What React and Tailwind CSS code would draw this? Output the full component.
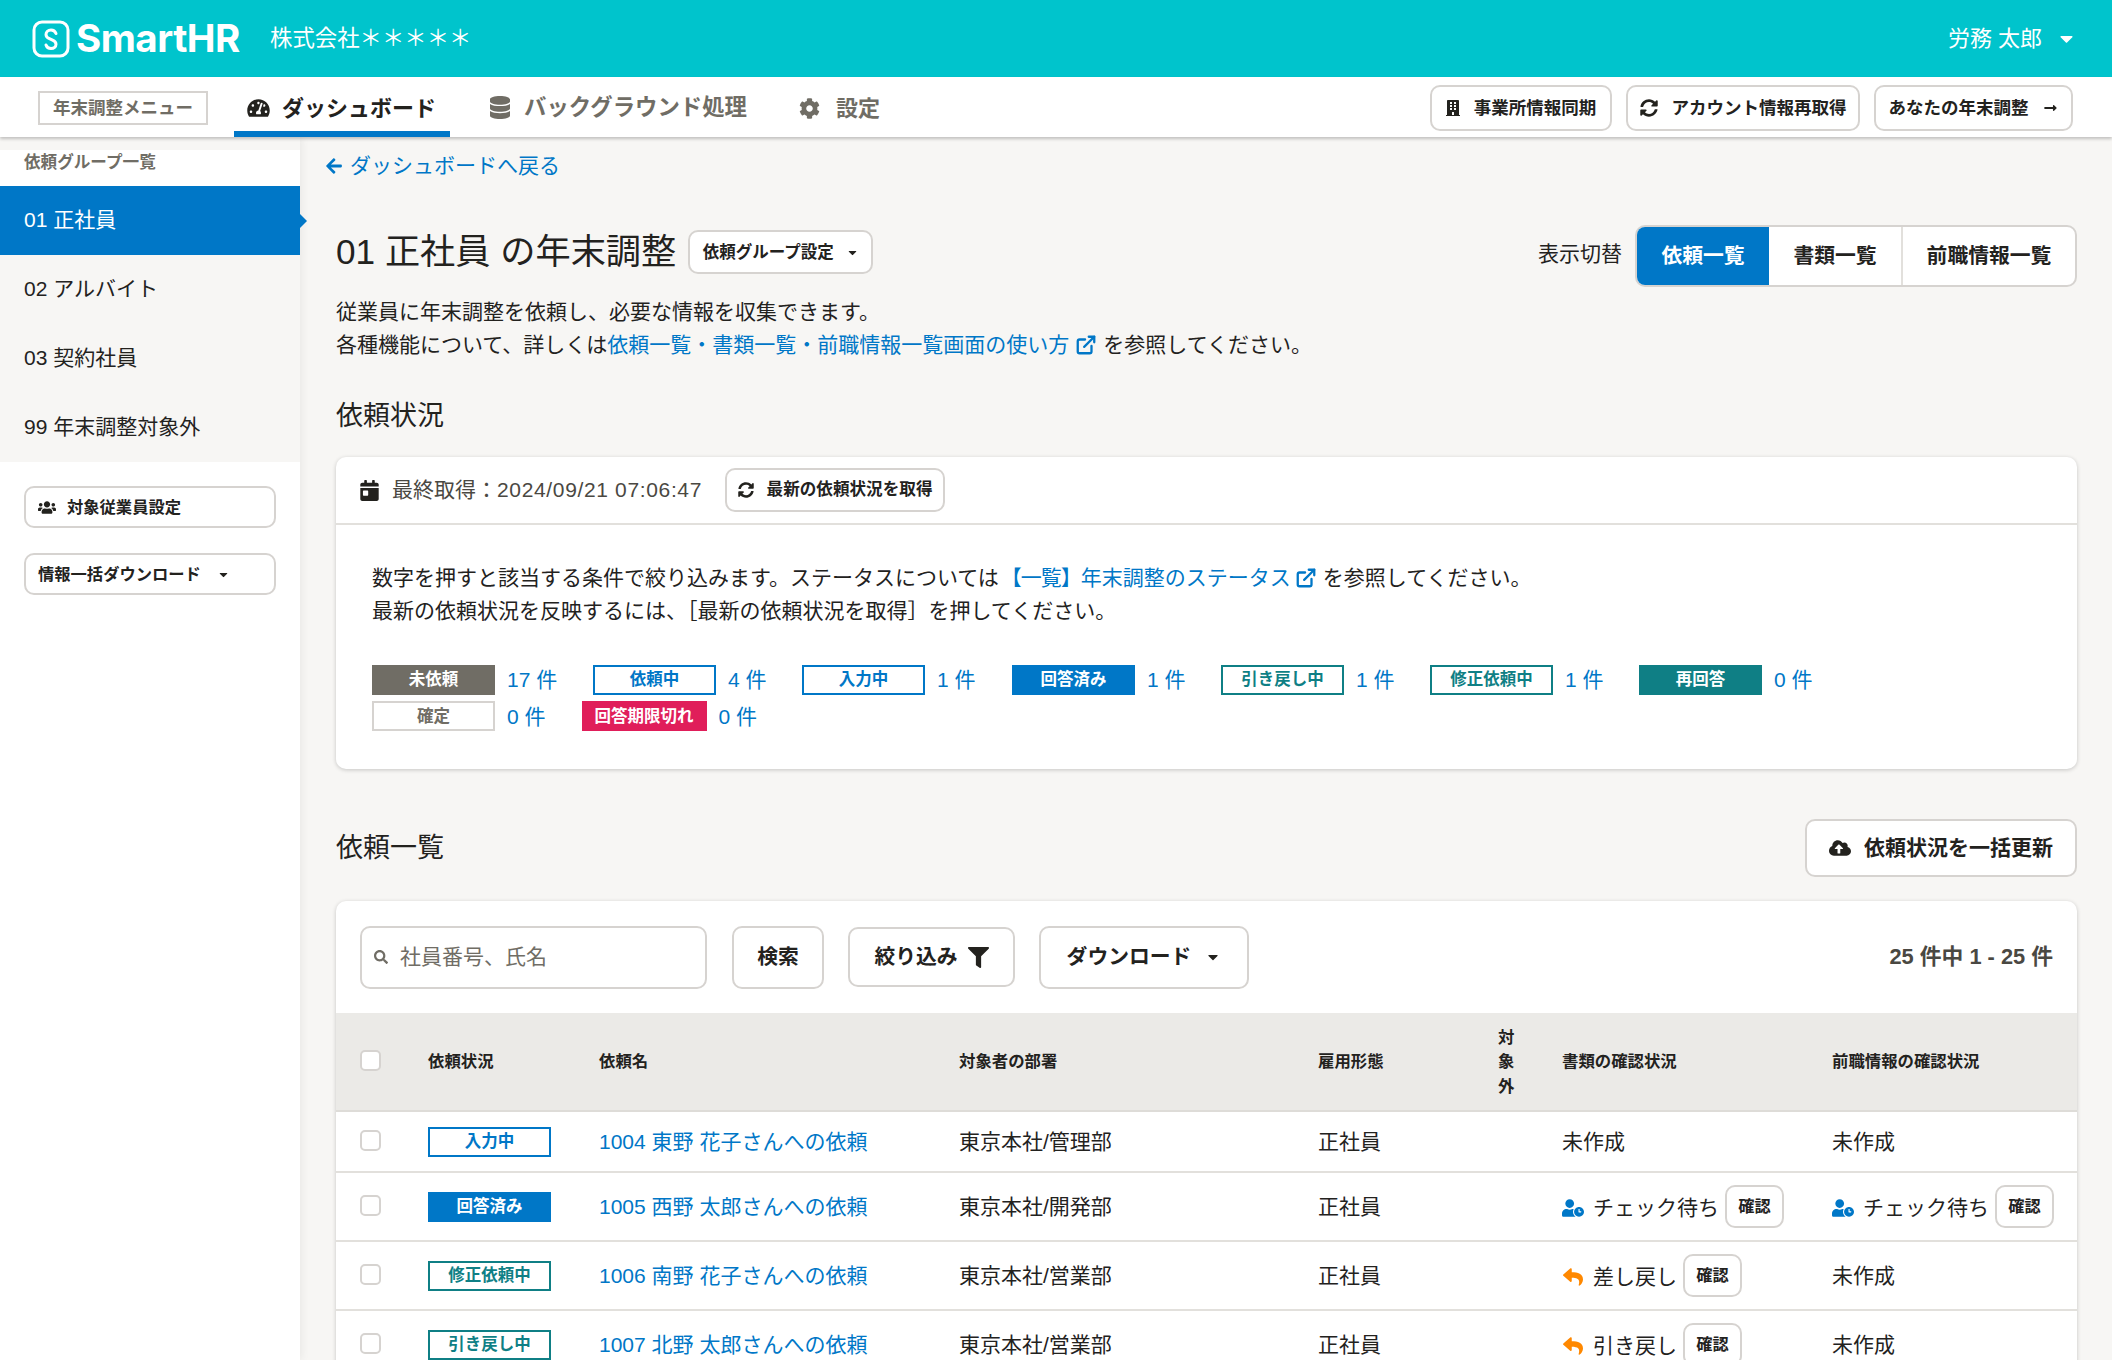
import React from "react";
import {
  FaTachometerAlt, FaDatabase, FaCog, FaBuilding, FaSyncAlt, FaLongArrowAltRight, FaCaretDown, FaArrowLeft,
  FaUsers, FaCalendarDay, FaCloudUploadAlt, FaSearch, FaFilter, FaUserClock, FaReply,
} from "react-icons/fa";
import { ExternalLink } from "lucide-react";

const link = "text-[#0077c7]";
const btn = "inline-flex items-center justify-center bg-white border-2 border-[#d6d3d0] rounded-[10px] font-bold text-[#23221e] whitespace-nowrap";

function Logo() {
  return (
    <div className="flex items-center w-[206px]">
      <svg width="38" height="38" viewBox="0 0 38 38" fill="none" stroke="white" className="shrink-0">
        <rect x="2" y="2" width="34" height="34" rx="8" strokeWidth="3" />
        <path d="M24 13.5c-1-2.6-3-3.5-5-3.5-3 0-5 2-5 4.4 0 2 1.2 3.3 3.4 4.3l3.2 1.4c2.2 1 3.4 2.2 3.4 4.2 0 2.4-2 4.2-5 4.2-2.2 0-4.200-1-5-3.500" strokeWidth="3" strokeLinecap="round" />
      </svg>
      <span className="ml-[6px] text-[38.500px] leading-none font-bold text-white tracking-[-0.5px] font-['Inter',sans-serif]">SmartHR</span>
    </div>
  );
}

function Header() {
  return (
    <header className="h-[77px] shrink-0 bg-[#00c4cc] flex items-center pl-8 pr-[35px] text-white">
      <Logo />
      <span className="ml-8 text-[22.400px]">株式会社＊＊＊＊＊</span>
      <span className="ml-auto text-[22px]">労務 太郎</span>
      <FaCaretDown className="ml-[14px] text-[21px]" />
    </header>
  );
}

function Nav() {
  return (
    <nav className="h-[60px] pt-[2px] shrink-0 bg-white flex items-center pl-[38px] pr-[39px] relative z-20 shadow-[0_2px_3px_rgba(0,0,0,0.22)]">
      <div className="w-[170px] h-[34px] border-2 border-[#d6d3d0] flex items-center justify-center text-[17.500px] font-bold text-[#706d65] whitespace-nowrap">年末調整メニュー</div>
      <div className="ml-[26px] w-[216px] h-full flex items-center pl-[13px] border-b-[6px] border-[#0077c7] pt-[6px] text-[22px] font-bold text-[#23221e] whitespace-nowrap">
        <FaTachometerAlt className="w-[23px] h-[20px] mr-[12px]" />ダッシュボード
      </div>
      <div className="ml-[27px] flex items-center pl-[13px] text-[22.400px] font-bold text-[#706d65] whitespace-nowrap">
        <FaDatabase className="w-[20px] h-[23px] mr-[14px]" />バックグラウンド処理
      </div>
      <div className="ml-[52px] flex items-center text-[22px] font-bold text-[#706d65] whitespace-nowrap">
        <FaCog className="w-[21px] h-[21px] mr-[16px]" />設定
      </div>
      <div className="ml-auto flex gap-[14px]">
        <div className={`${btn} w-[182px] h-[46px] text-[17.500px]`}><FaBuilding className="w-[14px] h-[18px] mr-[14px]" />事業所情報同期</div>
        <div className={`${btn} w-[234px] h-[46px] text-[17.500px]`}><FaSyncAlt className="w-[18px] h-[18px] mr-[14px]" />アカウント情報再取得</div>
        <div className={`${btn} w-[199px] h-[46px] text-[17.500px]`}>あなたの年末調整<FaLongArrowAltRight className="w-[17px] h-[14px] ml-[13px]" /></div>
      </div>
    </nav>
  );
}

function SideItem({ active, children }) {
  return (
    <div className={`h-[69px] flex items-center pl-6 pb-[2px] text-[21px] relative ${active ? "bg-[#0077c7] text-white" : "text-[#23221e]"}`}>
      {children}
      {active && <span className="absolute left-full top-1/2 -translate-y-1/2 border-y-[7px] border-y-transparent border-l-[7px] border-l-[#0077c7]" />}
    </div>
  );
}

function Sidebar() {
  return (
    <aside className="w-[300px] shrink-0 bg-white relative z-10 shadow-[2px_0_8px_rgba(0,0,0,0.06)] flex flex-col">
      <div className="h-[13px] bg-[#f7f6f4]" />
      <div className="h-[36px] flex items-start pl-6 text-[16.600px] leading-[26px] font-bold text-[#706d65]">依頼グループ一覧</div>
      <div className="bg-[#f7f6f4]">
        <SideItem active>01 正社員</SideItem>
        <SideItem>02 アルバイト</SideItem>
        <SideItem>03 契約社員</SideItem>
        <SideItem>99 年末調整対象外</SideItem>
      </div>
      <div className="px-6 pt-6 flex flex-col gap-[25px]">
        <div className={`${btn} !justify-start h-[42px] pl-[12px] text-[16.300px]`}><FaUsers className="w-[18px] h-[15px] mr-[11px]" />対象従業員設定</div>
        <div className={`${btn} !justify-start h-[42px] pl-[12px] text-[16.300px]`}>情報一括ダウンロード<FaCaretDown className="w-[13px] h-[13px] ml-[16px]" /></div>
      </div>
    </aside>
  );
}

function Badge({ kind, w = "w-[123px]", children }) {
  const styles = {
    gray: "bg-[#706d65] border-[#706d65] text-white",
    blue: "bg-white border-[#0077c7] text-[#0077c7]",
    solid: "bg-[#0077c7] border-[#0077c7] text-white",
    teal: "bg-white border-[#0f7f85] text-[#0f7f85]",
    solidteal: "bg-[#0f7f85] border-[#0f7f85] text-white",
    light: "bg-white border-[#d6d3d0] text-[#706d65]",
    red: "bg-[#e01e5a] border-[#e01e5a] text-white",
  };
  return <span className={`${w} h-[30px] shrink-0 border-2 flex items-center justify-center text-[16.500px] font-bold whitespace-nowrap ${styles[kind]}`}>{children}</span>;
}

function Stat({ kind, label, n, w, className = "" }) {
  return (
    <div className={`flex items-center ${className}`}>
      <Badge kind={kind} w={w}>{label}</Badge>
      <span className={`ml-[12px] text-[21px] ${link} whitespace-nowrap`}>{n} 件</span>
    </div>
  );
}

function StatusCard() {
  const row = [
    ["gray", "未依頼", 17],
    ["blue", "依頼中", 4],
    ["blue", "入力中", 1],
    ["solid", "回答済み", 1],
    ["teal", "引き戻し中", 1],
    ["teal", "修正依頼中", 1],
    ["solidteal", "再回答", 0],
  ];
  return (
    <section className="mt-[23px] h-[312px] bg-white rounded-[10px] shadow-[0_1px_4px_rgba(0,0,0,0.2)]">
      <div className="h-[68px] flex items-center pl-6 border-b-2 border-[#e2e0dc] text-[#23221e]">
        <FaCalendarDay className="w-[19px] h-[21px] mr-[13px] text-[#23221e]" />
        <span className="text-[21px] text-[#4a4842] whitespace-nowrap">最終取得：<span className="tracking-[0.65px]">2024/09/21 07:06:47</span></span>
        <div className={`${btn} ml-[23px] w-[220px] h-[44px] text-[16.600px]`}><FaSyncAlt className="w-[16px] h-[16px] mr-[13px]" />最新の依頼状況を取得</div>
      </div>
      <div className="pl-[36px] pt-[36px]">
        <p className="text-[21px] leading-[33px] text-[#23221e] whitespace-nowrap">
          数字を押すと該当する条件で絞り込みます。ステータスについては<span className={`${link} ml-[2px]`}><span className="tracking-[-1px]">【一覧】</span>年末調整のステータス<ExternalLink className="inline w-[22px] h-[22px] ml-[4px] mb-[2px]" strokeWidth={2.5} /></span><span className="ml-[6px]">を参照してください。</span>
        </p>
        <p className="text-[21px] leading-[33px] text-[#23221e] whitespace-nowrap">最新の依頼状況を反映するには、［最新の依頼状況を取得］を押してください。</p>
        <div className="mt-[37px] grid grid-cols-[221px_209px_210px_209px_209px_209px_auto] w-fit">
          {row.map(([k, l, n]) => <Stat key={l} kind={k} label={l} n={n} />)}
        </div>
        <div className="mt-[5px] flex items-center">
          <Stat kind="light" label="確定" n={0} />
          <Stat kind="red" label="回答期限切れ" n={0} w="w-[125px]" className="ml-[36px]" />
        </div>
      </div>
    </section>
  );
}

const cols = "grid grid-cols-[68px_171px_360px_359px_180px_64px_270px_1fr] pl-6 items-center";

function Checkbox() {
  return <span className="w-[21px] h-[21px] bg-white border-2 border-[#d6d3d0] rounded-[5px] block mb-[3px]" />;
}

function Confirm() {
  return <span className={`${btn} w-[59px] h-[43px] text-[16.200px] !rounded-[10px]`}>確認</span>;
}

function Check({ type, label, gap = "ml-[6px]" }) {
  if (!label) return <span>未作成</span>;
  return (
    <div className="flex items-center whitespace-nowrap">
      {type === "wait"
        ? <FaUserClock className="w-[22px] h-[18px] mr-[9px] text-[#0077c7] mt-[2px]" />
        : <FaReply className="w-[22px] h-[20px] mr-[9px] text-[#ff8800] mt-[3px]" />}
      <span className="mt-[2px]">{label}</span>
      <span className={gap}><Confirm /></span>
    </div>
  );
}

function Row({ h, badge, badgeKind, name, dept, doc, prior }) {
  return (
    <div className={`${cols} ${h} border-b-2 border-[#e2e0dc] text-[21px] text-[#23221e]`}>
      <Checkbox />
      <Badge kind={badgeKind}>{badge}</Badge>
      <span className={`${link} whitespace-nowrap`}>{name}</span>
      <span>{dept}</span>
      <span>正社員</span>
      <span />
      <Check {...doc} />
      <Check {...prior} />
    </div>
  );
}

function RequestCard() {
  return (
    <section className="mt-[24px] bg-white rounded-t-[10px] shadow-[0_1px_4px_rgba(0,0,0,0.2)]">
      <div className="h-[112px] flex items-center pl-6 pr-6">
        <div className="w-[347px] h-[63px] border-2 border-[#d6d3d0] rounded-[10px] flex items-center pl-[12px] text-[21px] text-[#706d65]">
          <FaSearch className="w-[14px] h-[14px] mr-[12px]" />社員番号、氏名
        </div>
        <div className={`${btn} ml-[25px] w-[92px] h-[63px] text-[20.800px]`}>検索</div>
        <div className={`${btn} ml-[24px] w-[167px] h-[60px] text-[20.800px]`}>絞り込み<FaFilter className="w-[21px] h-[21px] ml-[10px]" /></div>
        <div className={`${btn} ml-[24px] w-[210px] h-[63px] text-[20.800px]`}>ダウンロード<FaCaretDown className="w-[16px] h-[16px] ml-[14px]" /></div>
        <span className="ml-auto text-[21.800px] font-bold text-[#4a4842] whitespace-nowrap">25 件中 1 - 25 件</span>
      </div>
      <div className={`${cols} h-[99px] bg-[#ebeae7] border-b-2 border-[#dedcd8] text-[16.400px] font-bold text-[#23221e]`}>
        <Checkbox />
        <span>依頼状況</span>
        <span>依頼名</span>
        <span>対象者の部署</span>
        <span>雇用形態</span>
        <span className="w-[17px] leading-[24.500px]">対象外</span>
        <span>書類の確認状況</span>
        <span>前職情報の確認状況</span>
      </div>
      <Row h="h-[61px]" badgeKind="blue" badge="入力中" name="1004 東野 花子さんへの依頼" dept="東京本社/管理部" />
      <Row h="h-[69px]" badgeKind="solid" badge="回答済み" name="1005 西野 太郎さんへの依頼" dept="東京本社/開発部" doc={{ type: "wait", label: "チェック待ち" }} prior={{ type: "wait", label: "チェック待ち" }} />
      <Row h="h-[69px]" badgeKind="teal" badge="修正依頼中" name="1006 南野 花子さんへの依頼" dept="東京本社/営業部" doc={{ type: "reply", label: "差し戻し" }} />
      <Row h="h-[69px]" badgeKind="teal" badge="引き戻し中" name="1007 北野 太郎さんへの依頼" dept="東京本社/営業部" doc={{ type: "reply", label: "引き戻し" }} />
    </section>
  );
}

function Main() {
  return (
    <main className="flex-1 min-w-0 pl-[36px] pr-[35px] bg-[#f7f6f4] text-[#23221e]">
      <div className={`pt-[14px] -ml-[11px] h-[44px] flex items-center text-[21px] ${link}`}>
        <FaArrowLeft className="w-[18px] h-[18px] mr-[7px]" />ダッシュボードへ戻る
      </div>
      <div className="mt-[44px] flex items-start justify-between">
        <div className="h-[54px] flex items-center">
          <h1 className="text-[35.200px] font-normal whitespace-nowrap">01 正社員 の年末調整</h1>
          <div className={`${btn} ml-[12px] w-[185px] h-[44px] text-[16.500px]`}>依頼グループ設定<FaCaretDown className="w-[13px] h-[13px] ml-[12px]" /></div>
        </div>
        <div className="flex items-center h-[62px]">
          <span className="text-[21px] mr-[13px] mb-[4px]">表示切替</span>
          <div className="flex h-[62px] border-2 border-[#d6d3d0] rounded-[10px] overflow-hidden bg-white text-[20.800px] font-bold">
            <span className="w-[132px] bg-[#0077c7] text-white flex items-center justify-center">依頼一覧</span>
            <span className="w-[134px] border-r-2 border-[#e2e0dc] flex items-center justify-center">書類一覧</span>
            <span className="w-[172px] flex items-center justify-center">前職情報一覧</span>
          </div>
        </div>
      </div>
      <p className="mt-[8px] text-[21px] leading-[33px] whitespace-nowrap">従業員に年末調整を依頼し、必要な情報を収集できます。</p>
      <p className="text-[21px] leading-[33px] whitespace-nowrap">
        各種機能について、詳しくは<span className={link}>依頼一覧・書類一覧・前職情報一覧画面の使い方<ExternalLink className="inline w-[22px] h-[22px] ml-[6px] mb-[2px]" strokeWidth={2.5} /></span><span className="ml-[6px]">を参照してください。</span>
      </p>
      <h2 className="mt-[37px] text-[27px] leading-[36px] font-normal">依頼状況</h2>
      <StatusCard />
      <div className="mt-[50px] h-[58px] flex items-center justify-between">
        <h2 className="text-[27px] leading-[36px] font-normal">依頼一覧</h2>
        <div className={`${btn} w-[272px] h-[58px] text-[21px]`}><FaCloudUploadAlt className="w-[22px] h-[18px] mr-[13px]" />依頼状況を一括更新</div>
      </div>
      <RequestCard />
    </main>
  );
}

export default function App() {
  return (
    <div className="w-[2112px] h-[1360px] overflow-hidden flex flex-col bg-white font-['Liberation_Sans','Noto_Sans_CJK_JP',sans-serif]">
      <Header />
      <Nav />
      <div className="flex flex-1 min-h-0">
        <Sidebar />
        <Main />
      </div>
    </div>
  );
}
